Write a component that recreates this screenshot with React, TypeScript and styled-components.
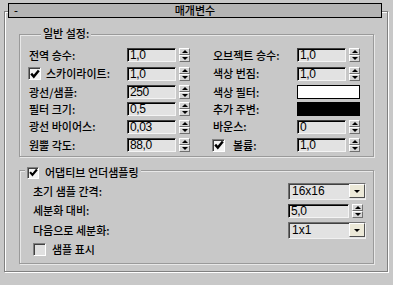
import React from "react";
import styled, { createGlobalStyle } from "styled-components";

const Global = createGlobalStyle`
  html, body { margin: 0; padding: 0; background: #c8c8c8; }
  body { font-family: "Noto Sans CJK KR", "Noto Sans", sans-serif; font-size: 11px; font-weight: 500; color: #000; }
`;

const Page = styled.div`
  padding: 11px 0 0 4px;
  width: 393px;
  height: 285px;
  box-sizing: border-box;
  overflow: hidden;
`;

const Frame = styled.div`
  width: 384px;
  box-sizing: border-box;
  border: 1px solid #808080;
  box-shadow: inset 1px 1px 0 #fff, 1px 1px 0 #fff;
  padding-bottom: 7px;
`;

const Header = styled.div`
  margin: -9px 0 0 3px;
  width: 374px;
  height: 15px;
  box-sizing: border-box;
  border: 1px solid #000;
  background: #b4b4b4;
  display: grid;
  grid-template-columns: 1fr auto 1fr;
  align-items: center;
  padding: 0 5px;
  line-height: 13px;
`;

const Group = styled.div<{ $mt: number }>`
  margin: ${(p) => p.$mt}px 0 0 14px;
  width: 355px;
  box-sizing: border-box;
  border: 1px solid #9a9a9a;
  box-shadow: inset 1px 1px 0 #e8e8e8, 1px 1px 0 #e8e8e8;
`;

const Legend = styled.div<{ $mt: number; $ml: number }>`
  margin: ${(p) => p.$mt}px 0 0 ${(p) => p.$ml}px;
  width: fit-content;
  background: #c8c8c8;
  display: flex;
  align-items: center;
  gap: 6px;
  padding: 0 2px;
  height: 13px;
  line-height: 13px;
`;

const Grid1 = styled.div`
  margin: 6px 0 2px 9px;
  display: grid;
  grid-template-columns: 98px 63px 23px 84px 63px;
  grid-template-rows: 18px 19px 18px 16px 19px 18px;
  align-items: center;
`;

const Grid2 = styled.div`
  margin: 2px 0 4px 13px;
  display: grid;
  grid-template-columns: 255px 78px;
  grid-template-rows: 20px 19px 20px 19px;
  align-items: center;
`;

const Label = styled.div`
  white-space: nowrap;
  line-height: 13px;
`;

const CheckLabel = styled.label<{ $col?: string; $gap: number; $ml?: number }>`
  grid-column: ${(p) => p.$col ?? "auto"};
  display: flex;
  align-items: center;
  gap: ${(p) => p.$gap}px;
  margin-left: ${(p) => p.$ml ?? 0}px;
  white-space: nowrap;
  line-height: 13px;
`;

const Spacer = styled.div``;

const Field = styled.div`
  display: flex;
  align-items: center;
  gap: 3px;
`;

const Input = styled.div<{ $w: number }>`
  width: ${(p) => p.$w}px;
  height: 14px;
  box-sizing: border-box;
  border-top: 1px solid #404040;
  border-left: 1px solid #404040;
  border-right: 1px solid #f4f4f4;
  border-bottom: 1px solid #f4f4f4;
  box-shadow: inset 1px 1px 0 #000;
  background: #e2e2e2;
  font-family: "Liberation Sans", Arial, sans-serif;
  font-weight: 400;
  font-size: 12px;
  letter-spacing: -0.4px;
  line-height: 13px;
  padding-left: 2px;
`;

const Spinner = styled.div`
  width: 11px;
  height: 14px;
  display: flex;
  flex-direction: column;
`;

const SpinBtn = styled.div<{ $down?: boolean }>`
  flex: 1;
  box-sizing: border-box;
  border-top: 1px solid #fff;
  border-left: 1px solid #fff;
  border-right: 1px solid #707070;
  border-bottom: 1px solid #707070;
  background: #d6d6d6;
  display: flex;
  align-items: center;
  justify-content: center;
  &::after {
    content: "";
    width: 0;
    height: 0;
    border-left: 3px solid transparent;
    border-right: 3px solid transparent;
    ${(p) => (p.$down ? "border-top: 3px solid #000;" : "border-bottom: 3px solid #000;")}
  }
`;

const Swatch = styled.div<{ $color: string }>`
  width: 63px;
  height: 14px;
  box-sizing: border-box;
  border: 1px solid #000;
  background: ${(p) => p.$color};
`;

const Box = styled.span<{ $size: number; $fill: string }>`
  width: ${(p) => p.$size}px;
  height: ${(p) => p.$size}px;
  box-sizing: border-box;
  flex: none;
  border-top: 1px solid #808080;
  border-left: 1px solid #808080;
  border-right: 1px solid #fff;
  border-bottom: 1px solid #fff;
  box-shadow: inset 1px 1px 0 #404040;
  background: ${(p) => p.$fill};
  display: flex;
  align-items: center;
  justify-content: center;
`;

const Drop = styled.div`
  width: 78px;
  height: 17px;
  box-sizing: border-box;
  border-top: 1px solid #707070;
  border-left: 1px solid #707070;
  border-right: 1px solid #f0f0f0;
  border-bottom: 1px solid #f0f0f0;
  box-shadow: inset 1px 1px 0 #404040;
  background: #e2e2e2;
  display: flex;
  align-items: center;
  justify-content: space-between;
  font-family: "Liberation Sans", Arial, sans-serif;
  font-weight: 400;
  font-size: 12px;
  line-height: 13px;
  padding-left: 3px;
`;

const DropBtn = styled.div`
  width: 16px;
  height: 14px;
  box-sizing: border-box;
  border-top: 1px solid #fff;
  border-left: 1px solid #fff;
  border-right: 1px solid #505050;
  border-bottom: 1px solid #505050;
  background: #ece9d8;
  display: flex;
  align-items: center;
  justify-content: center;
  &::after {
    content: "";
    border-left: 3px solid transparent;
    border-right: 3px solid transparent;
    border-top: 3px solid #000;
    margin-top: 1px;
  }
`;

const Check = ({ checked, size = 13 }: { checked: boolean; size?: number }) => (
  <Box $size={size} $fill={checked ? "#f4f4f4" : "#e0e0e0"}>
    {checked && (
      <svg width={size - 3} height={size - 3} viewBox="0 0 10 10">
        <polyline points="1.2,4.6 3.8,7.6 8.8,1.6" fill="none" stroke="#000" strokeWidth="2.4" />
      </svg>
    )}
  </Box>
);

const Spin = ({ value, w = 49 }: { value: string; w?: number }) => (
  <Field>
    <Input $w={w}>{value}</Input>
    <Spinner>
      <SpinBtn />
      <SpinBtn $down />
    </Spinner>
  </Field>
);

export default function App() {
  return (
    <Page>
      <Global />
      <Frame>
        <Header>
          <span>-</span>
          <span>매개변수</span>
          <span />
        </Header>
        <Group $mt={16}>
          <Legend $mt={-8} $ml={21}>일반 설정:</Legend>
          <Grid1>
            <Label>전역 승수:</Label>
            <Spin value="1,0" />
            <Spacer />
            <Label>오브젝트 승수:</Label>
            <Spin value="1,0" />

            <CheckLabel $gap={5} $ml={-1}>
              <Check checked />
              스카이라이트:
            </CheckLabel>
            <Spin value="1,0" />
            <Spacer />
            <Label>색상 번짐:</Label>
            <Spin value="1,0" />

            <Label>광선/샘플:</Label>
            <Spin value="250" />
            <Spacer />
            <Label>색상 필터:</Label>
            <Swatch $color="#ffffff" />

            <Label>필터 크기:</Label>
            <Spin value="0,5" />
            <Spacer />
            <Label>추가 주변:</Label>
            <Swatch $color="#000000" />

            <Label>광선 바이어스:</Label>
            <Spin value="0,03" />
            <Spacer />
            <Label>바운스:</Label>
            <Spin value="0" />

            <Label>원뿔 각도:</Label>
            <Spin value="88,0" />
            <Spacer />
            <CheckLabel $gap={8} $ml={-1}>
              <Check checked />
              볼륨:
            </CheckLabel>
            <Spin value="1,0" />
          </Grid1>
        </Group>
        <Group $mt={13}>
          <Legend $mt={-5} $ml={5}>
            <Check checked size={12} />
            어댑티브 언더샘플링
          </Legend>
          <Grid2>
            <Label>초기 샘플 간격:</Label>
            <Drop>
              16x16
              <DropBtn />
            </Drop>
            <Label>세분화 대비:</Label>
            <Spin value="5,0" w={61} />
            <Label>다음으로 세분화:</Label>
            <Drop>
              1x1
              <DropBtn />
            </Drop>
            <CheckLabel $col="1 / 3" $gap={6}>
              <Check checked={false} />
              샘플 표시
            </CheckLabel>
          </Grid2>
        </Group>
      </Frame>
    </Page>
  );
}
